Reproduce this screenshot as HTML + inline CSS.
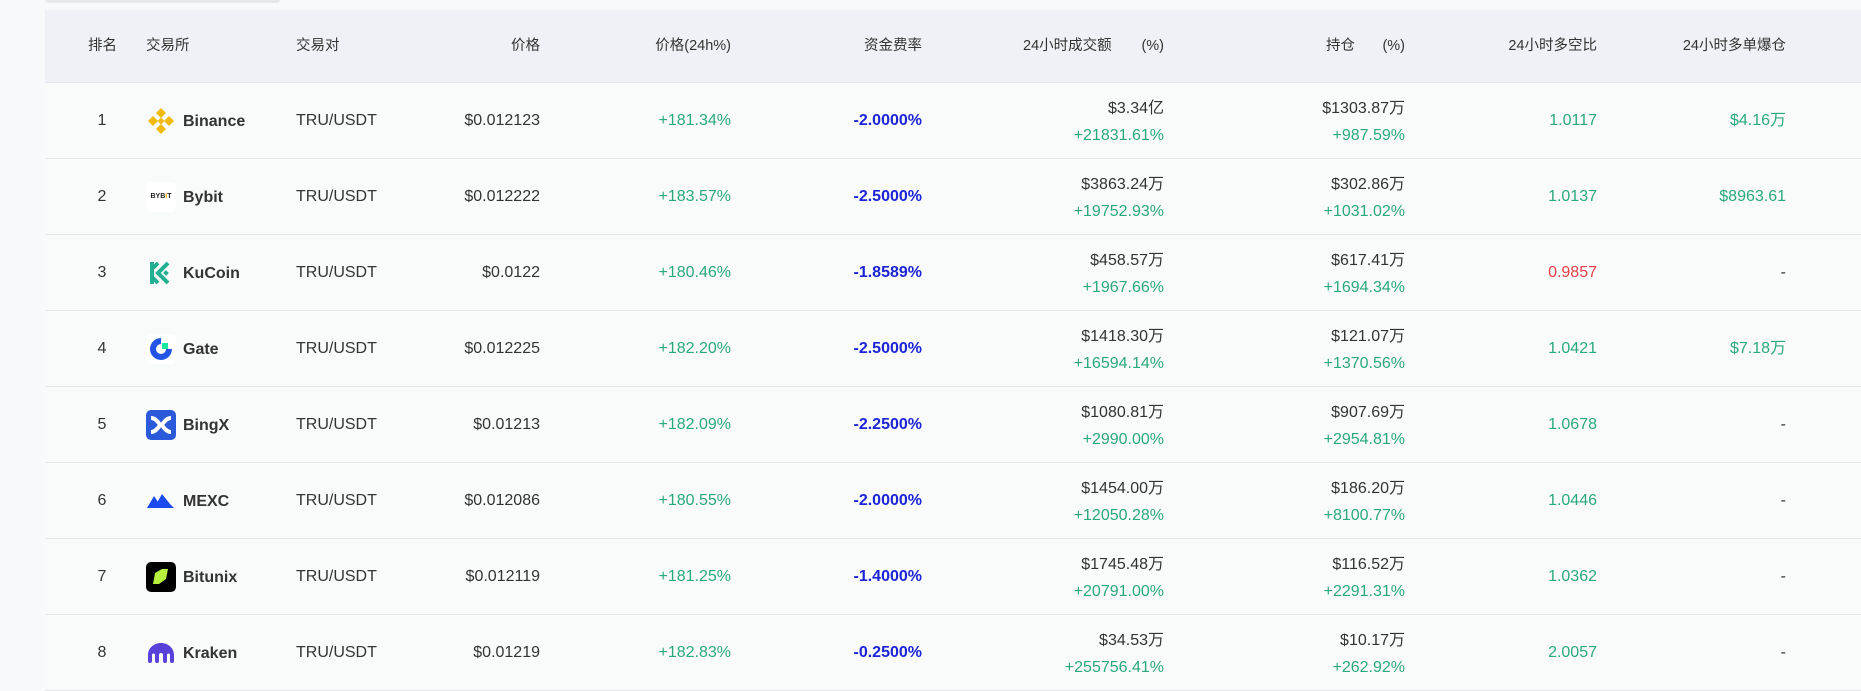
<!DOCTYPE html>
<html><head><meta charset="utf-8"><style>
*{margin:0;padding:0;box-sizing:border-box}
body{width:1861px;height:691px;overflow:hidden;background:#f8f9fa;font-family:"Liberation Sans","Noto Sans CJK SC",sans-serif;color:#333;position:relative}
.top{position:absolute;left:45px;top:0;width:235px;height:3px;background:#e6e8eb;border-radius:0 0 3px 3px}
.hd{position:absolute;left:45px;top:10px;width:1816px;height:73px;background:#eef1f5;border-bottom:1px solid #e3e6ea}
.row{position:absolute;left:45px;width:1816px;height:76px;background:#f9fafa;border-bottom:1px solid #e4e6e9}
.c{position:absolute;white-space:nowrap;font-size:16px;line-height:20px}
.h{font-size:14.5px;color:#333}
.r{text-align:right}
.g{color:#2aa97c}
.b{color:#1c24d8;font-weight:bold}
.red{color:#e5404a}
.logo{position:absolute;left:101px;top:23px;width:30px;height:30px;border-radius:5px}
.nm{position:absolute;left:138px;top:29px;font-weight:bold;font-size:16px;line-height:20px}
.t1{top:16px}.t2{top:43px}
</style></head><body>
<div class="top"></div>
<div class="hd">
<div class="c h" style="left:43px;top:26px">排名</div>
<div class="c h" style="left:101px;top:26px">交易所</div>
<div class="c h" style="left:251px;top:26px">交易对</div>
<div class="c h r" style="right:1321px;top:26px">价格</div>
<div class="c h r" style="right:1130px;top:26px">价格(24h%)</div>
<div class="c h r" style="right:939px;top:26px">资金费率</div>
<div class="c h" style="left:978px;top:26px">24小时成交额</div>
<div class="c h r" style="right:697px;top:26px">(%)</div>
<div class="c h" style="left:1281px;top:26px">持仓</div>
<div class="c h r" style="right:456px;top:26px">(%)</div>
<div class="c h r" style="right:264px;top:26px">24小时多空比</div>
<div class="c h r" style="right:75px;top:26px">24小时多单爆仓</div>
</div>
<div class="row" style="top:83px">
<div class="c" style="left:50px;top:28px;width:14px;text-align:center">1</div>
<svg class="logo" viewBox="0 0 30 30"><g fill="#f0b90b"><path d="M15 2l5 5-5 5-5-5z"/><path d="M15 18l5 5-5 5-5-5z"/><path d="M7 10l5 5-5 5-5-5z"/><path d="M23 10l5 5-5 5-5-5z"/><path d="M15 11.5l3.5 3.5-3.5 3.5-3.5-3.5z"/></g></svg>
<div class="nm">Binance</div>
<div class="c" style="left:251px;top:28px">TRU/USDT</div>
<div class="c r" style="right:1321px;top:28px">$0.012123</div>
<div class="c r g" style="right:1130px;top:28px">+181.34%</div>
<div class="c r b" style="right:939px;top:28px">-2.0000%</div>
<div class="c r t1" style="right:697px">$3.34亿</div>
<div class="c r g t2" style="right:697px">+21831.61%</div>
<div class="c r t1" style="right:456px">$1303.87万</div>
<div class="c r g t2" style="right:456px">+987.59%</div>
<div class="c r g" style="right:264px;top:28px">1.0117</div>
<div class="c r g" style="right:75px;top:28px">$4.16万</div>
</div>
<div class="row" style="top:159px">
<div class="c" style="left:50px;top:28px;width:14px;text-align:center">2</div>
<div class="logo" style="background:#fff;font-size:7px;font-weight:bold;line-height:30px;text-align:center;color:#222">BYB<span style="color:#f7a600">I</span>T</div>
<div class="nm">Bybit</div>
<div class="c" style="left:251px;top:28px">TRU/USDT</div>
<div class="c r" style="right:1321px;top:28px">$0.012222</div>
<div class="c r g" style="right:1130px;top:28px">+183.57%</div>
<div class="c r b" style="right:939px;top:28px">-2.5000%</div>
<div class="c r t1" style="right:697px">$3863.24万</div>
<div class="c r g t2" style="right:697px">+19752.93%</div>
<div class="c r t1" style="right:456px">$302.86万</div>
<div class="c r g t2" style="right:456px">+1031.02%</div>
<div class="c r g" style="right:264px;top:28px">1.0137</div>
<div class="c r g" style="right:75px;top:28px">$8963.61</div>
</div>
<div class="row" style="top:235px">
<div class="c" style="left:50px;top:28px;width:14px;text-align:center">3</div>
<svg class="logo" viewBox="0 0 30 30"><g fill="none" stroke="#23af91" stroke-width="4"><path d="M6 4v22"/><path d="M22 5l-10 10 10 10"/><path d="M12 5l-5 5M12 25l-5-5"/></g><rect x="18" y="13" width="4" height="4" fill="#23af91" transform="rotate(45 20 15)"/></svg>
<div class="nm">KuCoin</div>
<div class="c" style="left:251px;top:28px">TRU/USDT</div>
<div class="c r" style="right:1321px;top:28px">$0.0122</div>
<div class="c r g" style="right:1130px;top:28px">+180.46%</div>
<div class="c r b" style="right:939px;top:28px">-1.8589%</div>
<div class="c r t1" style="right:697px">$458.57万</div>
<div class="c r g t2" style="right:697px">+1967.66%</div>
<div class="c r t1" style="right:456px">$617.41万</div>
<div class="c r g t2" style="right:456px">+1694.34%</div>
<div class="c r red" style="right:264px;top:28px">0.9857</div>
<div class="c r" style="right:75px;top:28px">-</div>
</div>
<div class="row" style="top:311px">
<div class="c" style="left:50px;top:28px;width:14px;text-align:center">4</div>
<svg class="logo" viewBox="0 0 30 30"><rect width="30" height="30" rx="5" fill="#fff"/><path d="M15 4A11 11 0 1 0 26 15H20A5 5 0 1 1 15 10Z" fill="#2354e6"/><rect x="16" y="9" width="6" height="6" fill="#17e6a1"/></svg>
<div class="nm">Gate</div>
<div class="c" style="left:251px;top:28px">TRU/USDT</div>
<div class="c r" style="right:1321px;top:28px">$0.012225</div>
<div class="c r g" style="right:1130px;top:28px">+182.20%</div>
<div class="c r b" style="right:939px;top:28px">-2.5000%</div>
<div class="c r t1" style="right:697px">$1418.30万</div>
<div class="c r g t2" style="right:697px">+16594.14%</div>
<div class="c r t1" style="right:456px">$121.07万</div>
<div class="c r g t2" style="right:456px">+1370.56%</div>
<div class="c r g" style="right:264px;top:28px">1.0421</div>
<div class="c r g" style="right:75px;top:28px">$7.18万</div>
</div>
<div class="row" style="top:387px">
<div class="c" style="left:50px;top:28px;width:14px;text-align:center">5</div>
<svg class="logo" viewBox="0 0 30 30"><rect width="30" height="30" rx="4" fill="#2a5ada"/><path d="M5 8c6 0 8 7 10 7s4-7 10-7M5 22c6 0 8-7 10-7s4 7 10 7" fill="none" stroke="#fff" stroke-width="4"/></svg>
<div class="nm">BingX</div>
<div class="c" style="left:251px;top:28px">TRU/USDT</div>
<div class="c r" style="right:1321px;top:28px">$0.01213</div>
<div class="c r g" style="right:1130px;top:28px">+182.09%</div>
<div class="c r b" style="right:939px;top:28px">-2.2500%</div>
<div class="c r t1" style="right:697px">$1080.81万</div>
<div class="c r g t2" style="right:697px">+2990.00%</div>
<div class="c r t1" style="right:456px">$907.69万</div>
<div class="c r g t2" style="right:456px">+2954.81%</div>
<div class="c r g" style="right:264px;top:28px">1.0678</div>
<div class="c r" style="right:75px;top:28px">-</div>
</div>
<div class="row" style="top:463px">
<div class="c" style="left:50px;top:28px;width:14px;text-align:center">6</div>
<svg class="logo" viewBox="0 0 30 30"><path d="M1 22l7-12 4 6-3 6z" fill="#1a4bf0"/><path d="M8 22l8-14 8 10 4 4z" fill="#1a4bf0"/></svg>
<div class="nm">MEXC</div>
<div class="c" style="left:251px;top:28px">TRU/USDT</div>
<div class="c r" style="right:1321px;top:28px">$0.012086</div>
<div class="c r g" style="right:1130px;top:28px">+180.55%</div>
<div class="c r b" style="right:939px;top:28px">-2.0000%</div>
<div class="c r t1" style="right:697px">$1454.00万</div>
<div class="c r g t2" style="right:697px">+12050.28%</div>
<div class="c r t1" style="right:456px">$186.20万</div>
<div class="c r g t2" style="right:456px">+8100.77%</div>
<div class="c r g" style="right:264px;top:28px">1.0446</div>
<div class="c r" style="right:75px;top:28px">-</div>
</div>
<div class="row" style="top:539px">
<div class="c" style="left:50px;top:28px;width:14px;text-align:center">7</div>
<svg class="logo" viewBox="0 0 30 30"><rect width="30" height="30" rx="4" fill="#000"/><path d="M9 11l7-4h6l-2 10-7 5H7z" fill="#b6f03c"/></svg>
<div class="nm">Bitunix</div>
<div class="c" style="left:251px;top:28px">TRU/USDT</div>
<div class="c r" style="right:1321px;top:28px">$0.012119</div>
<div class="c r g" style="right:1130px;top:28px">+181.25%</div>
<div class="c r b" style="right:939px;top:28px">-1.4000%</div>
<div class="c r t1" style="right:697px">$1745.48万</div>
<div class="c r g t2" style="right:697px">+20791.00%</div>
<div class="c r t1" style="right:456px">$116.52万</div>
<div class="c r g t2" style="right:456px">+2291.31%</div>
<div class="c r g" style="right:264px;top:28px">1.0362</div>
<div class="c r" style="right:75px;top:28px">-</div>
</div>
<div class="row" style="top:615px">
<div class="c" style="left:50px;top:28px;width:14px;text-align:center">8</div>
<svg class="logo" viewBox="0 0 30 30"><path d="M15 5C8 5 2 10 2 17v6a2 2 0 0 0 4 0v-6a1.5 1.5 0 0 1 3 0v6a2 2 0 0 0 4 0v-6a2 2 0 0 1 4 0v6a2 2 0 0 0 4 0v-6a1.5 1.5 0 0 1 3 0v6a2 2 0 0 0 4 0v-6C28 10 22 5 15 5z" fill="#5741d9"/></svg>
<div class="nm">Kraken</div>
<div class="c" style="left:251px;top:28px">TRU/USDT</div>
<div class="c r" style="right:1321px;top:28px">$0.01219</div>
<div class="c r g" style="right:1130px;top:28px">+182.83%</div>
<div class="c r b" style="right:939px;top:28px">-0.2500%</div>
<div class="c r t1" style="right:697px">$34.53万</div>
<div class="c r g t2" style="right:697px">+255756.41%</div>
<div class="c r t1" style="right:456px">$10.17万</div>
<div class="c r g t2" style="right:456px">+262.92%</div>
<div class="c r g" style="right:264px;top:28px">2.0057</div>
<div class="c r" style="right:75px;top:28px">-</div>
</div>
</body></html>
